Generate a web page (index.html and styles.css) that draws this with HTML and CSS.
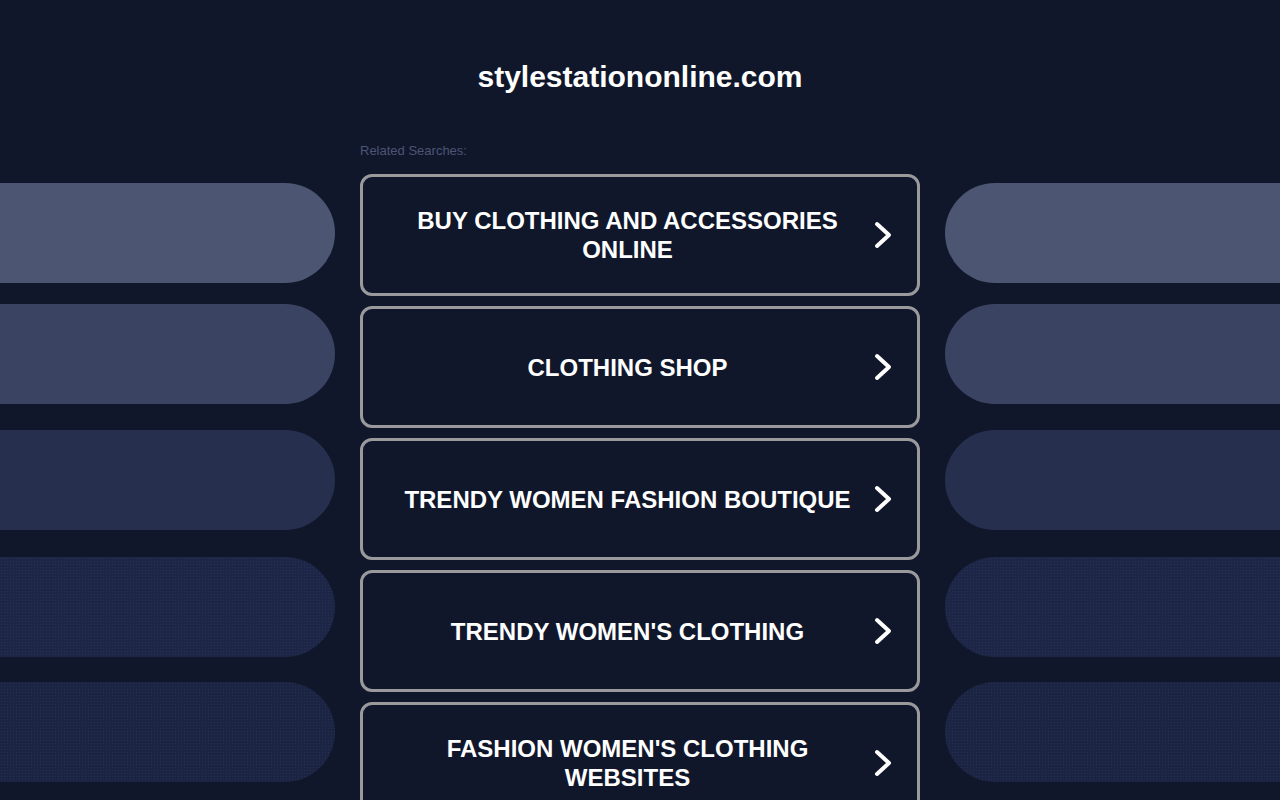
FILE: index.html
```html
<!DOCTYPE html>
<html lang="en">
<head>
<meta charset="utf-8">
<title>stylestationonline.com</title>
<link rel="stylesheet" href="styles.css">
</head>
<body>
<header class="site-header">
  <h1 class="domain">stylestationonline.com</h1>
</header>
<main class="layout">
  <div class="pills pills-left">
    <div class="pill tone-1"></div>
    <div class="pill tone-2"></div>
    <div class="pill tone-3"></div>
    <div class="pill tone-4"></div>
    <div class="pill tone-5"></div>
  </div>
  <section class="searches">
    <p class="searches-label">Related Searches:</p>
    <ul class="search-list">
      <li><a class="search-link" href="#"><span class="search-text">Buy Clothing and Accessories Online</span><svg class="chev" viewBox="0 0 24 30" aria-hidden="true"><path d="M6 4 L18 15 L6 26"/></svg></a></li>
      <li><a class="search-link" href="#"><span class="search-text">Clothing Shop</span><svg class="chev" viewBox="0 0 24 30" aria-hidden="true"><path d="M6 4 L18 15 L6 26"/></svg></a></li>
      <li><a class="search-link" href="#"><span class="search-text">Trendy Women Fashion Boutique</span><svg class="chev" viewBox="0 0 24 30" aria-hidden="true"><path d="M6 4 L18 15 L6 26"/></svg></a></li>
      <li><a class="search-link" href="#"><span class="search-text">Trendy Women's Clothing</span><svg class="chev" viewBox="0 0 24 30" aria-hidden="true"><path d="M6 4 L18 15 L6 26"/></svg></a></li>
      <li><a class="search-link" href="#"><span class="search-text">Fashion Women's Clothing Websites</span><svg class="chev" viewBox="0 0 24 30" aria-hidden="true"><path d="M6 4 L18 15 L6 26"/></svg></a></li>
    </ul>
  </section>
  <div class="pills pills-right">
    <div class="pill tone-1"></div>
    <div class="pill tone-2"></div>
    <div class="pill tone-3"></div>
    <div class="pill tone-4"></div>
    <div class="pill tone-5"></div>
  </div>
</main>
</body>
</html>
```

FILE: styles.css
```css
html, body {
  margin: 0;
  padding: 0;
}

body {
  background: #11172b;
  font-family: "Liberation Sans", Arial, sans-serif;
  color: #ffffff;
  overflow: hidden;
  height: 800px;
}

.site-header {
  padding-top: 59px;
  text-align: center;
}

.domain {
  margin: 0;
  font-size: 30px;
  line-height: 36px;
  font-weight: bold;
  color: #ffffff;
}

.layout {
  display: grid;
  grid-template-columns: 335px 560px 335px;
  column-gap: 25px;
  margin-top: 48px;
}

/* decorative side bars */
.pills {
  display: flex;
  flex-direction: column;
  padding-top: 40px;
}

.pill {
  height: 100px;
}

.pill + .pill { margin-top: 25px; }
.pill.tone-2 { margin-top: 21px; }
.pill.tone-3 { margin-top: 26px; }
.pill.tone-4 { margin-top: 27px; }

.pills-left .pill {
  border-radius: 0 50px 50px 0;
}

.pills-right .pill {
  border-radius: 50px 0 0 50px;
}

.tone-1 { background: #4c5672; }
.tone-2 { background: #3a4362; }
.tone-3 { background: #262f4e; }
.tone-4,
.tone-5 {
  background-color: #1d2646;
  background-image: radial-gradient(rgba(70, 85, 130, 0.25) 0.6px, transparent 0.9px);
  background-size: 3px 3px;
}
.tone-5 { background-color: #1c2444; }

/* related searches */
.searches-label {
  margin: 0 0 15px;
  font-size: 13px;
  line-height: 16px;
  color: #4b5575;
}

.search-list {
  list-style: none;
  margin: 0;
  padding: 0;
  display: flex;
  flex-direction: column;
  gap: 10px;
}

.search-link {
  display: flex;
  align-items: center;
  box-sizing: border-box;
  height: 122px;
  padding: 0 22px 0 21px;
  border: 3px solid #9a9a9c;
  border-radius: 12px;
  text-decoration: none;
  color: #ffffff;
  background: #11172b;
}

.search-text {
  flex: 1;
  text-align: center;
  text-transform: uppercase;
  font-weight: bold;
  font-size: 24px;
  line-height: 29px;
}

.chev {
  flex: none;
  width: 24px;
  height: 30px;
}

.chev path {
  fill: none;
  stroke: #ffffff;
  stroke-width: 4;
  stroke-linecap: round;
  stroke-linejoin: round;
}
```
